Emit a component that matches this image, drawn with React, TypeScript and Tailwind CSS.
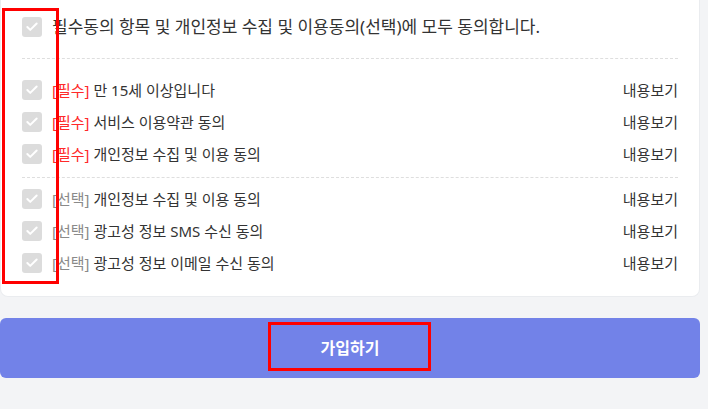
import { Check } from 'lucide-react'

type Term = { kind: 'required' | 'optional'; label: string }

const requiredTerms: Term[] = [
  { kind: 'required', label: '만 15세 이상입니다' },
  { kind: 'required', label: '서비스 이용약관 동의' },
  { kind: 'required', label: '개인정보 수집 및 이용 동의' },
]

const optionalTerms: Term[] = [
  { kind: 'optional', label: '개인정보 수집 및 이용 동의' },
  { kind: 'optional', label: '광고성 정보 SMS 수신 동의' },
  { kind: 'optional', label: '광고성 정보 이메일 수신 동의' },
]

function Box() {
  return (
    <span className="flex h-5 w-5 shrink-0 items-center justify-center rounded-[3px] bg-[#dcdcdc] text-white">
      <Check size={14} strokeWidth={3.4} />
    </span>
  )
}

function TermRow({ term }: { term: Term }) {
  return (
    <div className="flex h-8 items-center gap-[10px]">
      <Box />
      <span className="flex-1 text-[15px] text-[#333]">
        <span className={term.kind === 'required' ? 'text-[#ff2a2a]' : 'text-[#8a8a8a]'}>
          {term.kind === 'required' ? '[필수]' : '[선택]'}
        </span>{' '}
        {term.label}
      </span>
      <button type="button" className="text-[15px] text-[#333]">
        내용보기
      </button>
    </div>
  )
}

export default function App() {
  return (
    <div className="relative min-h-[409px] w-[708px] bg-[#f3f4f6] font-['Noto_Sans','Noto_Sans_CJK_KR',sans-serif]">
      <div className="w-[700px]">
        <section className="rounded-b-lg border border-t-0 border-[#eaecef] bg-white px-[21px] pb-[17px] pt-[17px]">
          <label className="flex h-5 items-center gap-[10px]">
            <Box />
            <span className="text-[17px] text-[#333]">
              필수동의 항목 및 개인정보 수집 및 이용동의(선택)에 모두 동의합니다.
            </span>
          </label>
          <div className="mt-[21px] border-t border-dashed border-[#dedede] pt-[15px]">
            {requiredTerms.map((t) => (
              <TermRow key={t.label} term={t} />
            ))}
          </div>
          <div className="mt-[7px] border-t border-dashed border-[#dedede] pt-[5px]">
            {optionalTerms.map((t) => (
              <TermRow key={t.label} term={t} />
            ))}
          </div>
        </section>
        <button
          type="button"
          className="mt-[21px] flex h-[60px] w-full items-center justify-center rounded-md bg-[#7282e8] text-[16px] font-bold text-white"
        >
          가입하기
        </button>
      </div>

      <div className="pointer-events-none absolute left-[2px] top-[8px] h-[276px] w-[57px] border-[3px] border-[#ff0000]" />
      <div className="pointer-events-none absolute left-[268px] top-[322px] h-[49px] w-[163px] border-[3px] border-[#ff0000]" />
    </div>
  )
}
